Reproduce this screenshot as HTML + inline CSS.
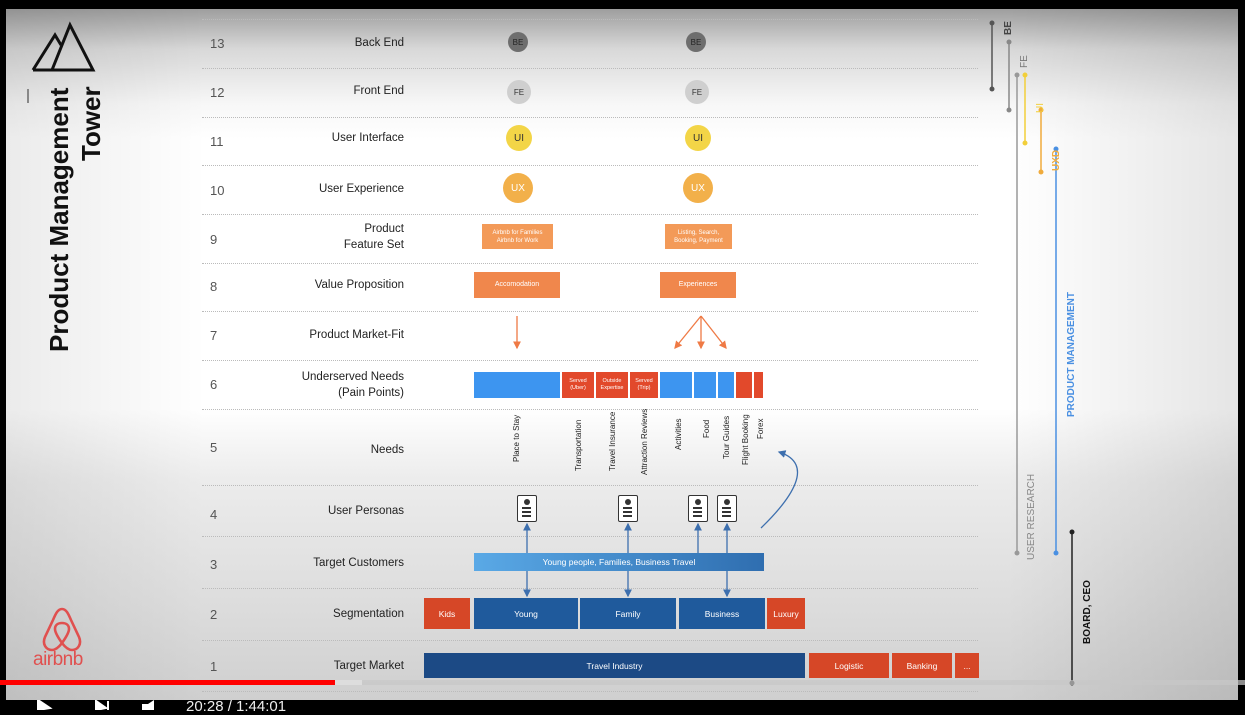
<!DOCTYPE html>
<html><head><meta charset="utf-8"><style>
*{margin:0;padding:0;box-sizing:border-box}
body{width:1245px;height:710px;background:#000;position:relative;overflow:hidden;font-family:"Liberation Sans",Arial,sans-serif}
#f{position:absolute;left:6px;top:9px;width:1232px;height:692px;background:linear-gradient(180deg,#9e9e9e 0px,#d8d8d8 40px,#f7f7f7 95px,#fff 130px,#fff 400px,#ececec 470px,#dcdcdc 600px,#cfcfcf 692px);overflow:hidden}
#v{position:absolute;inset:0;background:linear-gradient(90deg,rgba(0,0,0,.08) 0,rgba(0,0,0,0) 200px,rgba(0,0,0,0) 1000px,rgba(0,0,0,.1) 100%)}
.a{position:absolute}
.ln{position:absolute;left:196px;width:776px;border-top:1px dotted #bbb}
.n{position:absolute;left:204px;font-size:13px;color:#555;width:30px}
.lb{position:absolute;right:834px;font-size:11.5px;color:#222;text-align:right;line-height:16px}
.c{position:absolute;border-radius:50%;display:flex;align-items:center;justify-content:center;font-size:8px}
.b{position:absolute;display:flex;align-items:center;justify-content:center;color:#fff;font-size:8px;text-align:center;line-height:10px}
.vt{position:absolute;transform:rotate(-90deg);transform-origin:left top;font-size:8px;color:#222;white-space:nowrap}
.per{position:absolute;width:20px;height:27px;border:1.5px solid #333;border-radius:2px;background:#fff}
.per i{position:absolute;left:4px;width:9px;height:1.5px;background:#333}
</style></head><body>
<div id="f"><div id="v"></div>
<!-- logo -->
<svg class="a" style="left:20px;top:10px" width="80" height="60" viewBox="0 0 80 60"><path d="M7 51 L29 16 L35 26 M26 51 L44 6 L67 51 Z M7 51 L67 51" fill="none" stroke="#111" stroke-width="3" stroke-linejoin="miter"/></svg>
<div class="a" style="left:21px;top:80px;width:2px;height:14px;background:#888"></div>
<div class="a" style="left:38px;top:343px;transform:rotate(-90deg);transform-origin:left top;font-size:26px;font-weight:bold;color:#111;white-space:nowrap;line-height:30px">Product Management</div>
<div class="a" style="left:70px;top:152px;transform:rotate(-90deg);transform-origin:left top;font-size:26px;font-weight:bold;color:#111;white-space:nowrap;line-height:30px">Tower</div>
<svg class="a" style="left:34px;top:596px" width="44" height="48" viewBox="0 0 44 48"><path d="M22 4 C18 4 16 8 13 15 L5 32 C2 39 6 45 12 45 C16 45 19 42 22 38 C25 42 28 45 32 45 C38 45 42 39 39 32 L31 15 C28 8 26 4 22 4 Z M22 38 C17 31 15 27 15 24 C15 20 18 18 22 18 C26 18 29 20 29 24 C29 27 27 31 22 38 Z" fill="none" stroke="#e0504f" stroke-width="2.6"/></svg>
<div class="a" style="left:27px;top:640px;font-size:19px;color:#e0504f;letter-spacing:-.5px">airbnb</div>

<!-- lines -->
<div class="ln" style="top:10px"></div><div class="ln" style="top:59px"></div><div class="ln" style="top:108px"></div><div class="ln" style="top:156px"></div><div class="ln" style="top:205px"></div><div class="ln" style="top:254px"></div><div class="ln" style="top:302px"></div><div class="ln" style="top:351px"></div><div class="ln" style="top:400px"></div><div class="ln" style="top:476px"></div><div class="ln" style="top:527px"></div><div class="ln" style="top:579px"></div><div class="ln" style="top:631px"></div><div class="ln" style="top:682px"></div>

<div class="n" style="top:27px">13</div><div class="n" style="top:76px">12</div><div class="n" style="top:125px">11</div><div class="n" style="top:174px">10</div><div class="n" style="top:223px">9</div><div class="n" style="top:270px">8</div><div class="n" style="top:319px">7</div><div class="n" style="top:368px">6</div><div class="n" style="top:431px">5</div><div class="n" style="top:498px">4</div><div class="n" style="top:548px">3</div><div class="n" style="top:598px">2</div><div class="n" style="top:650px">1</div>

<div class="lb" style="top:26px">Back End</div><div class="lb" style="top:74px">Front End</div><div class="lb" style="top:121px">User Interface</div><div class="lb" style="top:172px">User Experience</div><div class="lb" style="top:212px">Product<br>Feature Set</div><div class="lb" style="top:268px">Value Proposition</div><div class="lb" style="top:318px">Product Market-Fit</div><div class="lb" style="top:360px">Underserved Needs<br>(Pain Points)</div><div class="lb" style="top:433px">Needs</div><div class="lb" style="top:494px">User Personas</div><div class="lb" style="top:546px">Target Customers</div><div class="lb" style="top:597px">Segmentation</div><div class="lb" style="top:649px">Target Market</div>

<!-- circles -->
<div class="c" style="left:502px;top:23px;width:20px;height:20px;background:#6e6e6e;color:#222">BE</div>
<div class="c" style="left:680px;top:23px;width:20px;height:20px;background:#6e6e6e;color:#222">BE</div>
<div class="c" style="left:501px;top:71px;width:24px;height:24px;background:#cfcfcf;color:#333">FE</div>
<div class="c" style="left:679px;top:71px;width:24px;height:24px;background:#cfcfcf;color:#333">FE</div>
<div class="c" style="left:500px;top:116px;width:26px;height:26px;background:#f3d547;color:#333;font-size:10px">UI</div>
<div class="c" style="left:679px;top:116px;width:26px;height:26px;background:#f3d547;color:#333;font-size:10px">UI</div>
<div class="c" style="left:497px;top:164px;width:30px;height:30px;background:#f2b04a;color:#fff;font-size:10px">UX</div>
<div class="c" style="left:677px;top:164px;width:30px;height:30px;background:#f2b04a;color:#fff;font-size:10px">UX</div>

<div class="b" style="left:476px;top:215px;width:71px;height:25px;background:#f39a58;font-size:6px;line-height:8px">Airbnb for Families<br>Airbnb for Work</div>
<div class="b" style="left:659px;top:215px;width:67px;height:25px;background:#f39a58;font-size:6px;line-height:8px">Listing, Search,<br>Booking, Payment</div>
<div class="b" style="left:468px;top:263px;width:86px;height:26px;background:#f0874c;font-size:7px">Accomodation</div>
<div class="b" style="left:654px;top:263px;width:76px;height:26px;background:#f0874c;font-size:7px">Experiences</div>

<svg class="a" style="left:0;top:0" width="1232" height="692">
<defs><marker id="ao" markerWidth="6" markerHeight="6" refX="5" refY="3" orient="auto"><path d="M0 0 L6 3 L0 6 Z" fill="#ef7a45"/></marker>
<marker id="ab" markerWidth="6" markerHeight="6" refX="5" refY="3" orient="auto"><path d="M0 0 L6 3 L0 6 Z" fill="#3d6fae"/></marker></defs>
<g stroke="#ef7a45" stroke-width="1.3"><line x1="511" y1="307" x2="511" y2="339" marker-end="url(#ao)"/>
<line x1="695" y1="307" x2="669" y2="339" marker-end="url(#ao)"/><line x1="695" y1="307" x2="695" y2="339" marker-end="url(#ao)"/><line x1="695" y1="307" x2="720" y2="339" marker-end="url(#ao)"/></g>
<g stroke="#3d6fae" stroke-width="1.3" fill="none">
<line x1="521" y1="544" x2="521" y2="515" marker-end="url(#ab)"/><line x1="521" y1="560" x2="521" y2="587" marker-end="url(#ab)"/>
<line x1="622" y1="544" x2="622" y2="515" marker-end="url(#ab)"/><line x1="622" y1="560" x2="622" y2="587" marker-end="url(#ab)"/>
<line x1="692" y1="544" x2="692" y2="515" marker-end="url(#ab)"/>
<line x1="721" y1="544" x2="721" y2="515" marker-end="url(#ab)"/><line x1="721" y1="560" x2="721" y2="587" marker-end="url(#ab)"/>
<path d="M755 519 C785 490 810 455 773 443" marker-end="url(#ab)"/></g>
<!-- right bars -->
<g stroke-width="1.5">
<line x1="986" y1="14" x2="986" y2="80" stroke="#555"/><line x1="1003" y1="33" x2="1003" y2="101" stroke="#888"/>
<line x1="1011" y1="66" x2="1011" y2="544" stroke="#999"/><line x1="1019" y1="66" x2="1019" y2="134" stroke="#f2cf3a"/>
<line x1="1035" y1="101" x2="1035" y2="163" stroke="#f0ab3c"/><line x1="1050" y1="140" x2="1050" y2="544" stroke="#4a90e2"/>
<line x1="1066" y1="523" x2="1066" y2="674" stroke="#222"/></g>
<g><circle cx="986" cy="14" r="2.5" fill="#555"/><circle cx="986" cy="80" r="2.5" fill="#555"/><circle cx="1003" cy="33" r="2.5" fill="#888"/><circle cx="1003" cy="101" r="2.5" fill="#888"/><circle cx="1011" cy="66" r="2.5" fill="#999"/><circle cx="1011" cy="544" r="2.5" fill="#999"/><circle cx="1019" cy="66" r="2.5" fill="#f2cf3a"/><circle cx="1019" cy="134" r="2.5" fill="#f2cf3a"/><circle cx="1035" cy="101" r="2.5" fill="#f0ab3c"/><circle cx="1035" cy="163" r="2.5" fill="#f0ab3c"/><circle cx="1050" cy="140" r="2.5" fill="#4a90e2"/><circle cx="1050" cy="544" r="2.5" fill="#4a90e2"/><circle cx="1066" cy="523" r="2.5" fill="#222"/><circle cx="1066" cy="674" r="2.5" fill="#222"/></g>
</svg>
<div class="vt" style="left:997px;top:26px;font-size:10px;font-weight:bold;color:#444">BE</div>
<div class="vt" style="left:1013px;top:59px;font-size:10px;color:#777">FE</div>
<div class="vt" style="left:1029px;top:104px;font-size:10px;color:#f2cf3a">UI</div>
<div class="vt" style="left:1045px;top:162px;font-size:10px;font-weight:bold;color:#f0ab3c">UXD</div>
<div class="vt" style="left:1060px;top:408px;font-size:10px;font-weight:bold;color:#4a90e2">PRODUCT MANAGEMENT</div>
<div class="vt" style="left:1020px;top:551px;font-size:10px;color:#888">USER RESEARCH</div>
<div class="vt" style="left:1076px;top:635px;font-size:10px;font-weight:bold;color:#111">BOARD, CEO</div>

<!-- pain points -->
<div class="b" style="left:468px;top:363px;width:86px;height:26px;background:#3d95f0"></div>
<div class="b" style="left:556px;top:363px;width:32px;height:26px;background:#e2492b;font-size:5.5px;line-height:7px">Served<br>(Uber)</div>
<div class="b" style="left:590px;top:363px;width:32px;height:26px;background:#e2492b;font-size:5.5px;line-height:7px">Outside<br>Expertise</div>
<div class="b" style="left:624px;top:363px;width:28px;height:26px;background:#e2492b;font-size:5.5px;line-height:7px">Served<br>(Trip)</div>
<div class="b" style="left:654px;top:363px;width:32px;height:26px;background:#3d95f0"></div>
<div class="b" style="left:688px;top:363px;width:22px;height:26px;background:#3d95f0"></div>
<div class="b" style="left:712px;top:363px;width:16px;height:26px;background:#3d95f0"></div>
<div class="b" style="left:730px;top:363px;width:16px;height:26px;background:#e2492b"></div>
<div class="b" style="left:748px;top:363px;width:9px;height:26px;background:#e2492b"></div>

<div class="vt" style="left:506px;top:453px">Place to Stay</div>
<div class="vt" style="left:568px;top:462px">Transportation</div>
<div class="vt" style="left:602px;top:462px">Travel Insurance</div>
<div class="vt" style="left:634px;top:466px">Attraction Reviews</div>
<div class="vt" style="left:668px;top:441px">Activities</div>
<div class="vt" style="left:696px;top:429px">Food</div>
<div class="vt" style="left:716px;top:450px">Tour Guides</div>
<div class="vt" style="left:735px;top:456px">Flight Booking</div>
<div class="vt" style="left:750px;top:430px">Forex</div>

<!-- personas -->
<div class="per" style="left:511px;top:486px"><span style="position:absolute;left:6px;top:3px;width:6px;height:6px;border-radius:50%;background:#333"></span><i style="top:11px"></i><i style="top:15px"></i><i style="top:19px"></i></div>
<div class="per" style="left:612px;top:486px"><span style="position:absolute;left:6px;top:3px;width:6px;height:6px;border-radius:50%;background:#333"></span><i style="top:11px"></i><i style="top:15px"></i><i style="top:19px"></i></div>
<div class="per" style="left:682px;top:486px"><span style="position:absolute;left:6px;top:3px;width:6px;height:6px;border-radius:50%;background:#333"></span><i style="top:11px"></i><i style="top:15px"></i><i style="top:19px"></i></div>
<div class="per" style="left:711px;top:486px"><span style="position:absolute;left:6px;top:3px;width:6px;height:6px;border-radius:50%;background:#333"></span><i style="top:11px"></i><i style="top:15px"></i><i style="top:19px"></i></div>

<div class="b" style="left:468px;top:544px;width:290px;height:18px;background:linear-gradient(90deg,#5aa9e6,#2f6eb0);font-size:8.5px">Young people, Families, Business Travel</div>

<div class="b" style="left:418px;top:589px;width:46px;height:31px;background:#d64727;font-size:8.5px">Kids</div>
<div class="b" style="left:468px;top:589px;width:104px;height:31px;background:#1f5a9c;font-size:8.5px">Young</div>
<div class="b" style="left:574px;top:589px;width:96px;height:31px;background:#1f5a9c;font-size:8.5px">Family</div>
<div class="b" style="left:673px;top:589px;width:86px;height:31px;background:#1f5a9c;font-size:8.5px">Business</div>
<div class="b" style="left:761px;top:589px;width:38px;height:31px;background:#d64727;font-size:8.5px">Luxury</div>

<div class="b" style="left:418px;top:644px;width:381px;height:25px;background:#1c4a85;font-size:8.5px">Travel Industry</div>
<div class="b" style="left:803px;top:644px;width:80px;height:25px;background:#d64727;font-size:8.5px">Logistic</div>
<div class="b" style="left:886px;top:644px;width:60px;height:25px;background:#d64727;font-size:8.5px">Banking</div>
<div class="b" style="left:949px;top:644px;width:24px;height:25px;background:#d64727;font-size:8.5px">...</div>
</div>
<!-- youtube bar -->
<div class="a" style="left:0;top:680px;width:1245px;height:5px;background:rgba(200,200,200,.7)"></div>
<div class="a" style="left:0;top:680px;width:362px;height:5px;background:#ddd"></div>
<div class="a" style="left:0;top:680px;width:335px;height:5px;background:#f00"></div>
<div class="a" style="left:0;top:700px;width:1245px;height:10px;background:#000"></div>
<div class="a" style="left:186px;top:698px;color:#eee;font-size:15px">20:28 / 1:44:01</div>
<svg class="a" style="left:36px;top:700px" width="140" height="10"><path d="M2 0 L14 8 L2 10Z M60 1 L70 8 L60 10Z M72 1 L72 10" fill="#fff" stroke="#fff" stroke-width="2"/><path d="M106 4 L112 4 L118 0 L118 10 L106 10Z" fill="#fff"/></svg>
</body></html>
